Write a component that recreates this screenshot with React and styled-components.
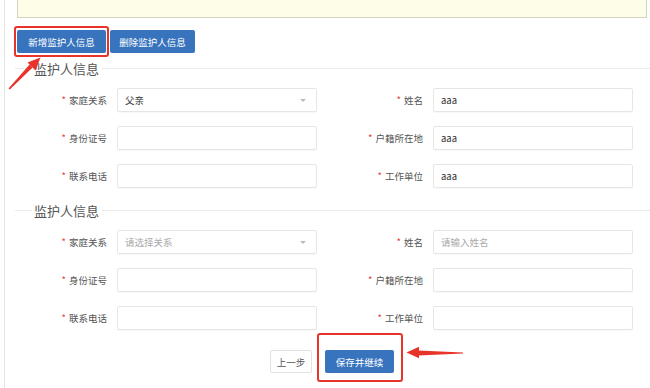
import React from "react";
import styled, { createGlobalStyle } from "styled-components";

const GlobalStyle = createGlobalStyle`
  body {
    margin: 0;
    background: #fff;
    font-family: "Noto Sans CJK SC", "Noto Sans", sans-serif;
  }
`;

const FONT = `"Noto Sans CJK SC", "Noto Sans", sans-serif`;

const firstGroup = [
  { label: "家庭关系", type: "select", value: "父亲" },
  { label: "姓名", value: "aaa" },
  { label: "身份证号", value: "" },
  { label: "户籍所在地", value: "aaa" },
  { label: "联系电话", value: "" },
  { label: "工作单位", value: "aaa" },
];

const secondGroup = [
  { label: "家庭关系", type: "select", placeholder: "请选择关系" },
  { label: "姓名", placeholder: "请输入姓名" },
  { label: "身份证号" },
  { label: "户籍所在地" },
  { label: "联系电话" },
  { label: "工作单位" },
];

const App = () => {
  return (
    <Page>
      <GlobalStyle />
      <Panel>
        <Notice />
        <Toolbar>
          <BlueButton $w={89}>新增监护人信息</BlueButton>
          <BlueButton $w={85}>删除监护人信息</BlueButton>
        </Toolbar>

        <Section $first>
          <SectionTitle>
            <span>监护人信息</span>
          </SectionTitle>
          <FieldGrid>
            {firstGroup.map((f, i) => (
              <Field key={i} field={f} right={i % 2 === 1} />
            ))}
          </FieldGrid>
        </Section>

        <Section>
          <SectionTitle>
            <span>监护人信息</span>
          </SectionTitle>
          <FieldGrid>
            {secondGroup.map((f, i) => (
              <Field key={i} field={f} right={i % 2 === 1} />
            ))}
          </FieldGrid>
        </Section>

        <Footer>
          <PlainButton>上一步</PlainButton>
          <BlueButton $w={69}>保存并继续</BlueButton>
        </Footer>
      </Panel>

      <Highlight $left={14} $top={26} $w={95} $h={31} />
      <Highlight $left={317} $top={333} $w={86} $h={49} />
      <Arrows viewBox="0 0 650 388" width="650" height="388">
        <polygon points="8.5,88.5 9.8,89.6 32.6,67.6 29.6,64.6" fill="#e8332a" />
        <polygon points="40.5,57.5 27.5,62.5 35.5,70.5" fill="#e8332a" />
        <polygon points="418,350.6 463,352.6 463,353.6 418,355.4" fill="#e8332a" />
        <polygon points="406.5,352.5 419,346.8 419,358.2" fill="#e8332a" />
      </Arrows>
    </Page>
  );
};

const Field = ({ field, right }) => {
  return (
    <FieldRow>
      <Label $width={right ? 116 : 100}>
        <Star>*</Star>
        {field.label}
      </Label>
      {field.type === "select" ? (
        <Select $empty={!field.value}>{field.value || field.placeholder}</Select>
      ) : (
        <Input
          readOnly
          defaultValue={field.value || ""}
          placeholder={field.placeholder || ""}
        />
      )}
    </FieldRow>
  );
};

export default App;

const Page = styled.div`
  position: relative;
  width: 650px;
  height: 388px;
  overflow: hidden;
  padding-left: 4px;
  box-sizing: border-box;
`;

const Panel = styled.div`
  height: 100%;
  border-left: 1px solid #e4e4e4;
  padding-left: 12px;
`;

const Notice = styled.div`
  height: 17px;
  margin-right: 3px;
  background: #fdfde8;
  border: 1px solid #d4d4c0;
  border-top: none;
`;

const Toolbar = styled.div`
  display: flex;
  gap: 4px;
  margin-top: 12px;
`;

const BlueButton = styled.button`
  width: ${(p) => p.$w}px;
  height: 23px;
  padding: 0;
  border: none;
  border-radius: 2px;
  background: #3873be;
  color: #fff;
  font-family: ${FONT};
  font-size: 9.5px;
  cursor: pointer;
`;

const PlainButton = styled.button`
  width: 42px;
  height: 23px;
  padding: 0;
  border: 1px solid #e2e2e2;
  border-radius: 2px;
  background: #fff;
  color: #555;
  font-family: ${FONT};
  font-size: 9.5px;
`;

const Section = styled.div`
  margin-top: ${(p) => (p.$first ? 7 : 14)}px;
`;

const SectionTitle = styled.div`
  display: flex;
  align-items: center;
  margin-left: -2px;
  height: 16px;
  font-size: 13px;
  color: #555;
  &::before {
    content: "";
    width: 17px;
    height: 1px;
    background: #ebebeb;
  }
  &::after {
    content: "";
    flex: 1;
    height: 1px;
    background: #ebebeb;
  }
  span {
    padding: 0 3px 0 2px;
  }
`;

const FieldGrid = styled.div`
  display: grid;
  grid-template-columns: 300px 316px;
  row-gap: 14px;
  margin-top: 12px;
`;

const FieldRow = styled.div`
  display: flex;
  align-items: center;
`;

const Label = styled.label`
  width: ${(p) => p.$width}px;
  padding-right: 10px;
  box-sizing: border-box;
  text-align: right;
  font-size: 9.5px;
  color: #555;
  white-space: nowrap;
`;

const Star = styled.span`
  color: #e4393c;
  margin-right: 3px;
`;

const Input = styled.input`
  width: 200px;
  height: 24px;
  box-sizing: border-box;
  padding: 0 7px;
  border: 1px solid #e6e6e6;
  border-radius: 2px;
  box-shadow: 0 1px 1px rgba(0, 0, 0, 0.03);
  font-family: ${FONT};
  font-size: 9.5px;
  color: #333;
  outline: none;
  &::placeholder {
    color: #aaa;
  }
`;

const Select = styled.div`
  position: relative;
  width: 200px;
  height: 24px;
  box-sizing: border-box;
  padding: 0 7px;
  border: 1px solid #e6e6e6;
  border-radius: 2px;
  box-shadow: 0 1px 1px rgba(0, 0, 0, 0.03);
  display: flex;
  align-items: center;
  font-size: 9.5px;
  color: ${(p) => (p.$empty ? "#aaa" : "#333")};
  &::after {
    content: "";
    position: absolute;
    right: 10px;
    top: 10px;
    border-left: 3.5px solid transparent;
    border-right: 3.5px solid transparent;
    border-top: 3.5px solid #bbb;
  }
`;

const Footer = styled.div`
  display: flex;
  justify-content: center;
  gap: 13px;
  margin-top: 20px;
  padding-right: 3px;
`;

const Highlight = styled.div`
  position: absolute;
  left: ${(p) => p.$left}px;
  top: ${(p) => p.$top}px;
  width: ${(p) => p.$w}px;
  height: ${(p) => p.$h}px;
  box-sizing: border-box;
  border: 2px solid #e8332a;
  border-radius: 3px;
  pointer-events: none;
`;

const Arrows = styled.svg`
  position: absolute;
  left: 0;
  top: 0;
  pointer-events: none;
`;
